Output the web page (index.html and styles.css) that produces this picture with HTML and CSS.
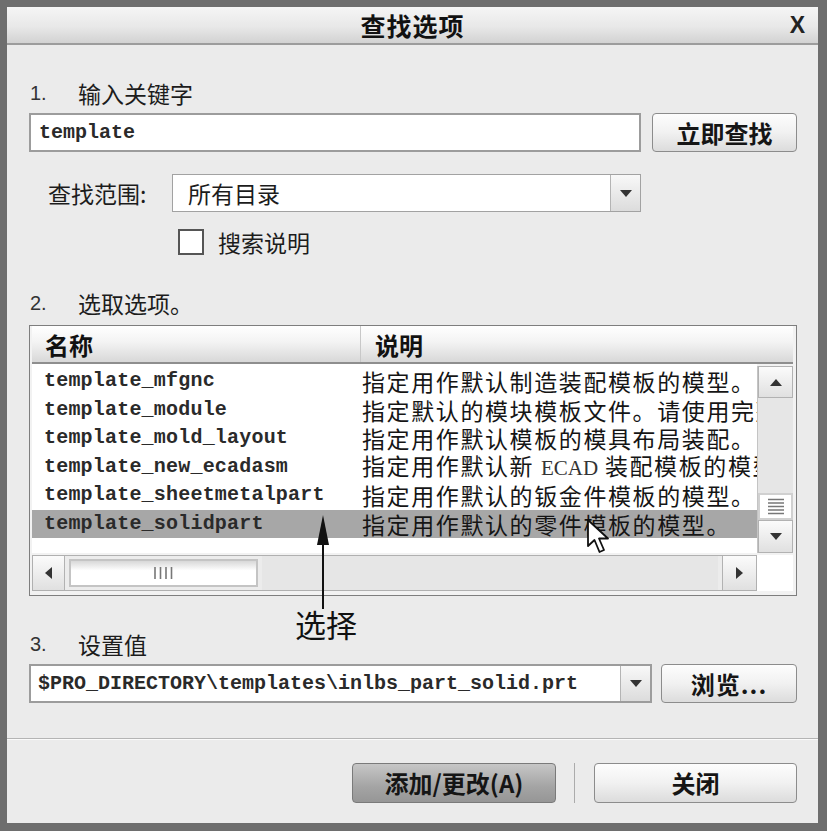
FILE: index.html
```html
<!DOCTYPE html>
<html lang="zh-CN">
<head>
    <meta charset="UTF-8">
    <meta name="viewport" content="width=device-width, initial-scale=1.0">
    <title>查找选项</title>
    <link rel="stylesheet" href="styles.css">
</head>
<body>
    <div class="dialog">
        <div class="title-bar">
            <span></span>
            <span class="title">查找选项</span>
            <span class="close">X</span>
        </div>

        <div class="content">
            <div class="step"><span class="step-num">1.</span>输入关键字</div>
            <div class="search-row">
                <div class="field mono">template</div>
                <button class="btn btn-search">立即查找</button>
            </div>
            <div class="scope-row">
                <span class="scope-label">查找范围:</span>
                <div class="combo combo-scope">
                    <span class="combo-text">所有目录</span>
                    <span class="combo-arrow">
                        <svg width="12" height="7" viewBox="0 0 12 7"><polygon points="0,0 12,0 6,7" fill="#333"/></svg>
                    </span>
                </div>
            </div>
            <div class="check-row"><span class="checkbox"></span>搜索说明</div>

            <div class="step step-2"><span class="step-num">2.</span>选取选项。</div>
            <div class="list">
                <div class="list-head">
                    <div class="col-name">名称</div>
                    <div class="col-desc">说明</div>
                </div>
                <div class="list-main">
                    <div class="rows">
                        <div class="row"><span class="cell-name">template_mfgnc</span><span class="cell-desc">指定用作默认制造装配模板的模型。</span></div>
                        <div class="row"><span class="cell-name">template_module</span><span class="cell-desc">指定默认的模块模板文件。请使用完整路径</span></div>
                        <div class="row"><span class="cell-name">template_mold_layout</span><span class="cell-desc">指定用作默认模板的模具布局装配。</span></div>
                        <div class="row"><span class="cell-name">template_new_ecadasm</span><span class="cell-desc">指定用作默认新 <span class="latin">ECAD</span> 装配模板的模型。</span></div>
                        <div class="row"><span class="cell-name">template_sheetmetalpart</span><span class="cell-desc">指定用作默认的钣金件模板的模型。</span></div>
                        <div class="row selected"><span class="cell-name">template_solidpart</span><span class="cell-desc">指定用作默认的零件模板的模型。</span></div>
                    </div>
                    <div class="vscroll">
                        <div class="sb-btn sb-up">
                            <svg width="12" height="7" viewBox="0 0 12 7"><polygon points="0,7 12,7 6,0" fill="#333"/></svg>
                        </div>
                        <div class="sb-track"></div>
                        <div class="sb-thumb-v">
                            <svg width="18" height="17" viewBox="0 0 18 17">
                                <path d="M1 1.5H17M1 5H17M1 8.5H17M1 12H17M1 15.5H17" stroke="#777" stroke-width="1.4"/>
                            </svg>
                        </div>
                        <div class="sb-btn sb-down">
                            <svg width="12" height="7" viewBox="0 0 12 7"><polygon points="0,0 12,0 6,7" fill="#333"/></svg>
                        </div>
                    </div>
                    <div class="hscroll">
                        <div class="sb-btn sb-left">
                            <svg width="7" height="12" viewBox="0 0 7 12"><polygon points="7,0 7,12 0,6" fill="#333"/></svg>
                        </div>
                        <div class="sb-thumb-h">
                            <svg width="22" height="14" viewBox="0 0 22 14">
                                <path d="M2 1V13M7.5 1V13M13 1V13M18.5 1V13" stroke="#777" stroke-width="1.6"/>
                            </svg>
                        </div>
                        <div class="sb-track"></div>
                        <div class="sb-btn sb-right">
                            <svg width="7" height="12" viewBox="0 0 7 12"><polygon points="0,0 0,12 7,6" fill="#333"/></svg>
                        </div>
                    </div>
                    <div class="corner"></div>
                </div>
            </div>

            <div class="step step-3"><span class="step-num">3.</span>设置值</div>
            <div class="path-row">
                <div class="combo combo-path">
                    <span class="combo-text mono">$PRO_DIRECTORY\templates\inlbs_part_solid.prt</span>
                    <span class="combo-arrow">
                        <svg width="12" height="7" viewBox="0 0 12 7"><polygon points="0,0 12,0 6,7" fill="#333"/></svg>
                    </span>
                </div>
                <button class="btn btn-browse">浏览...</button>
            </div>

            <div class="separator"></div>

            <div class="footer">
                <button class="btn btn-primary">添加/更改(A)</button>
                <span class="footer-divider"></span>
                <button class="btn btn-close">关闭</button>
            </div>
        </div>

        <!-- annotation over the list -->
        <svg class="note-arrow" width="16" height="94" viewBox="0 0 16 94">
            <polygon points="8,0 14,30 2,30" fill="#111"/>
            <line x1="8" y1="20" x2="8" y2="94" stroke="#111" stroke-width="2"/>
        </svg>
        <span class="note-text">选择</span>

        <svg class="cursor" width="24" height="36" viewBox="0 0 24 36">
            <path d="M1 1V27L7.5 21L12.5 33L17 31L12 19.5H21Z" fill="#fff" stroke="#111" stroke-width="1.8" stroke-linejoin="round"/>
        </svg>
    </div>
</body>
</html>
```

FILE: styles.css
```css
body {
    margin: 0;
    background-color: #fff;
}

.dialog {
    position: relative;
    width: 827px;
    height: 831px;
    box-sizing: border-box;
    border: 7px solid #6e6e6e;
    border-right-width: 9px;
    border-bottom-width: 8px;
    background-color: #ebebeb;
    font-family: "Noto Sans CJK SC", sans-serif;
    color: #1c1c1c;
    display: flex;
    flex-direction: column;
}

/* Title bar */
.title-bar {
    height: 36px;
    display: grid;
    grid-template-columns: 1fr auto 1fr;
    align-items: center;
    background: linear-gradient(#f5f5f5, #e8e8e8 55%, #d2d2d2);
    border-bottom: 2px solid #9c9c9c;
}

.title {
    font-size: 25px;
    font-weight: bold;
    color: #111;
    letter-spacing: 1px;
}

.close {
    justify-self: end;
    padding-right: 13px;
    font-family: "Liberation Sans Narrow", "Liberation Sans", sans-serif;
    font-size: 23px;
    font-weight: bold;
    color: #222;
    line-height: 1;
}

.content {
    flex: 1;
    display: flex;
    flex-direction: column;
    padding: 0 21px 0 22px;
}

/* Section labels */
.step {
    margin-top: 36px;
    height: 24px;
    display: flex;
    align-items: center;
    font-size: 23px;
    line-height: 24px;
}

.step-num {
    width: 48px;
    padding-left: 1px;
    font-family: "Liberation Sans", sans-serif;
    font-size: 20px;
    color: #333;
}

.mono {
    font-family: "Liberation Mono", monospace;
    font-size: 20px;
    font-weight: bold;
    color: #2a2a2a;
}

.field {
    width: 612px;
    box-sizing: border-box;
    border: 2px solid #9c9c9c;
    background-color: #fff;
    display: flex;
    align-items: center;
    padding-left: 8px;
}

.search-row {
    margin-top: 8px;
    height: 39px;
    display: flex;
    gap: 11px;
}

/* Buttons */
.btn {
    box-sizing: border-box;
    height: 100%;
    border: 1px solid #8c8c8c;
    border-radius: 4px;
    background: linear-gradient(#fdfdfd, #f1f1f1 50%, #dcdcdc);
    font-family: "Noto Sans CJK SC", sans-serif;
    font-size: 24px;
    font-weight: bold;
    color: #151515;
    padding: 0;
    line-height: 1;
}

.btn-search {
    width: 145px;
}

/* Combo boxes */
.scope-row {
    margin-top: 22px;
    height: 38px;
    display: flex;
}

.scope-label {
    width: 143px;
    box-sizing: border-box;
    padding-left: 19px;
    font-size: 23px;
    display: flex;
    align-items: center;
}

.combo {
    display: flex;
    box-sizing: border-box;
    border: 1px solid #a2a2a2;
    background-color: #fff;
}

.combo-scope {
    width: 469px;
    font-size: 23px;
}

.combo-text {
    flex: 1;
    display: flex;
    align-items: center;
    padding-left: 15px;
    overflow: hidden;
    white-space: nowrap;
}

.combo-arrow {
    width: 29px;
    border-left: 1px solid #b4b4b4;
    background: linear-gradient(#f8f8f8, #dcdcdc);
    display: flex;
    align-items: center;
    justify-content: center;
}

.check-row {
    margin-top: 17px;
    height: 26px;
    display: flex;
    align-items: center;
    gap: 14px;
    padding-left: 149px;
    font-size: 23px;
}

.checkbox {
    width: 26px;
    height: 26px;
    box-sizing: border-box;
    border: 2px solid #555;
    background-color: #fff;
}

/* Options list */
.list {
    margin-top: 10px;
    height: 271px;
    box-sizing: border-box;
    border: 1px solid #7e7e7e;
    background-color: #f2f2f2;
    padding: 0 3px 4px 2px;
    display: flex;
    flex-direction: column;
}

.list-head {
    height: 36px;
    display: flex;
    align-items: center;
    background: linear-gradient(#ffffff, #f3f3f3 45%, #d8d8d8);
    border-bottom: 2px solid #8e8e8e;
    font-size: 24px;
    font-weight: bold;
    color: #111;
}

.col-name {
    width: 329px;
    padding-left: 13px;
    box-sizing: border-box;
    border-right: 1px solid #c8c8c8;
    height: 100%;
    display: flex;
    align-items: center;
}

.col-desc {
    padding-left: 14px;
}

.list-main {
    flex: 1;
    display: grid;
    grid-template-columns: 725px 36px;
    grid-template-rows: 189px 36px;
    row-gap: 2px;
}

.rows {
    background-color: #fff;
    padding-top: 3px;
    overflow: hidden;
}

.row {
    height: 28.5px;
    line-height: 26px;
    display: flex;
    align-items: center;
    white-space: nowrap;
}

.row.selected {
    background-color: #a7a7a7;
}

.cell-name {
    width: 330px;
    flex: none;
    padding-left: 12px;
    box-sizing: border-box;
    font-family: "Liberation Mono", monospace;
    font-size: 20px;
    font-weight: bold;
    color: #2a2a2a;
    letter-spacing: 0.2px;
}

.cell-desc {
    font-size: 23px;
    letter-spacing: 1.6px;
    color: #151515;
}

.latin {
    font-family: "Liberation Serif", serif;
    font-size: 21px;
    color: #333;
    letter-spacing: 0;
}

/* Scroll bars */
.vscroll {
    margin-top: 2px;
    display: flex;
    flex-direction: column;
    background-color: #e4e4e4;
    border-left: 1px solid #c4c4c4;
}

.sb-btn {
    display: flex;
    align-items: center;
    justify-content: center;
    box-sizing: border-box;
    border: 1px solid #b2b2b2;
    background: linear-gradient(#fbfbfb, #e0e0e0);
}

.sb-up {
    height: 32px;
}

.sb-down {
    height: 33px;
}

.sb-track {
    flex: 1;
    background-color: #e6e6e6;
}

.sb-thumb-v {
    height: 27px;
    display: flex;
    align-items: center;
    justify-content: center;
    box-sizing: border-box;
    border: 2px solid #d0d0d0;
    background-color: #fff;
}

.hscroll {
    display: flex;
    align-items: stretch;
    gap: 4px;
    background-color: #ececec;
    border: 1px solid #b0b0b0;
    box-sizing: border-box;
}

.sb-left {
    width: 32px;
    border-width: 0 1px 0 0;
}

.sb-right {
    width: 34px;
    border-width: 0 0 0 1px;
}

.sb-thumb-h {
    width: 189px;
    margin: 3px 0;
    display: flex;
    align-items: center;
    justify-content: center;
    box-sizing: border-box;
    border: 2px solid #c4c4c4;
    background: linear-gradient(#d8d8d8, #ffffff 40%, #ffffff);
}

.corner {
    background-color: #fff;
}

/* Set value */
.path-row {
    margin-top: 8px;
    height: 39px;
    display: flex;
    gap: 9px;
}

.combo-path {
    width: 623px;
    border: 2px solid #9c9c9c;
}

.combo-path .combo-text {
    padding-left: 7px;
}

.btn-browse {
    width: 136px;
    letter-spacing: 1px;
}

.separator {
    margin: 35px -21px 0 -22px;
    height: 1px;
    background-color: #b4b4b4;
    border-bottom: 1px solid #fafafa;
}

.footer {
    margin-top: 23px;
    height: 40px;
    display: flex;
    justify-content: flex-end;
    align-items: stretch;
}

.btn-primary {
    width: 204px;
    background: linear-gradient(#c6c6c6, #a4a4a4 60%, #969696);
    border-color: #7a7a7a;
}

.footer-divider {
    width: 1px;
    margin: 0 19px 0 18px;
    background-color: #ababab;
}

.btn-close {
    width: 203px;
}

/* Annotation drawn over the list */
.note-arrow {
    position: absolute;
    left: 308px;
    top: 508px;
}

.note-text {
    position: absolute;
    left: 288px;
    top: 601px;
    font-size: 31px;
    line-height: 1;
    color: #111;
}

.cursor {
    position: absolute;
    left: 580px;
    top: 512px;
}
```
